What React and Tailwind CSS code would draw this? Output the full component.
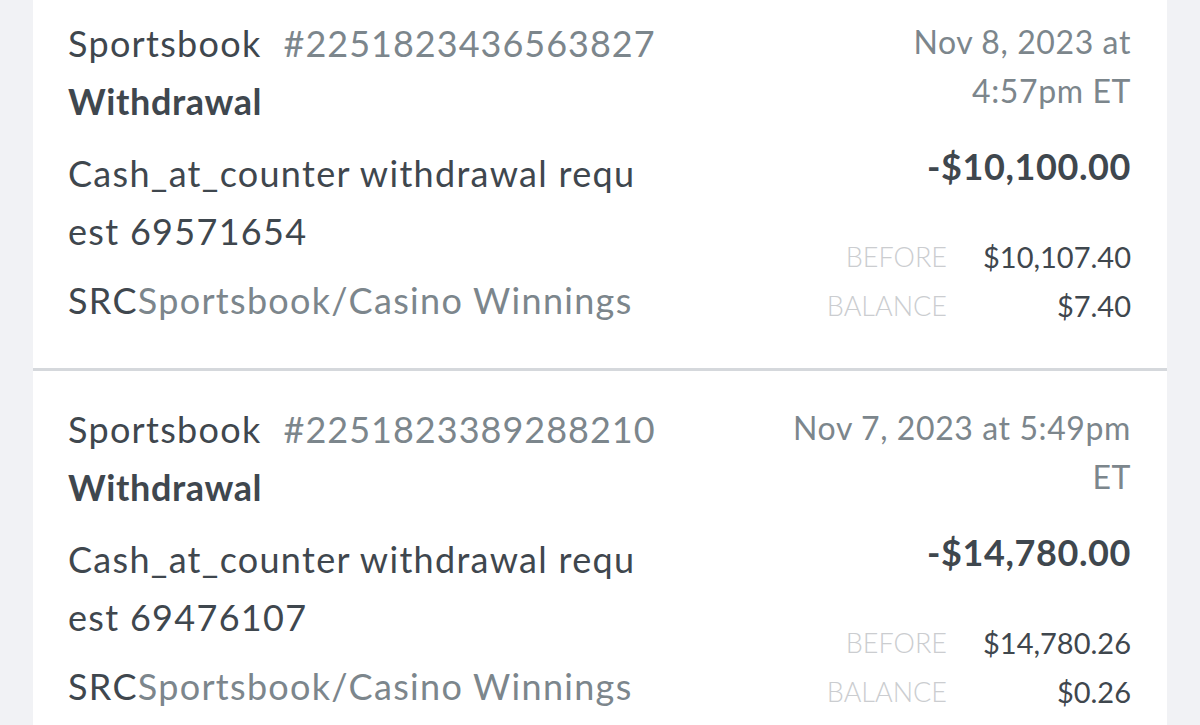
const transactions = [
  {
    id: '#2251823436563827',
    type: 'Withdrawal',
    desc: ['Cash_at_counter withdrawal requ', 'est 69571654'],
    date: ['Nov 8, 2023 at', '4:57pm ET'],
    amount: '-$10,100.00',
    before: '$10,107.40',
    balance: '$7.40',
  },
  {
    id: '#2251823389288210',
    type: 'Withdrawal',
    desc: ['Cash_at_counter withdrawal requ', 'est 69476107'],
    date: ['Nov 7, 2023 at 5:49pm', 'ET'],
    amount: '-$14,780.00',
    before: '$14,780.26',
    balance: '$0.26',
  },
];

function TransactionCard({ tx }) {
  return (
    <div className="flex justify-between bg-white pl-[35px] pr-[36px] pt-[29px] pb-[38px]">
      {/* left side: ref, type, description */}
      <div className="flex flex-col text-[36px] tracking-[1.3px] text-[#3f474e]">
        <div className="flex h-[58px] items-center">
          <span>Sportsbook</span>
          <span className="ml-[22px] tracking-[1px] text-[#7c868c]">{tx.id}</span>
        </div>
        <div className="flex h-[58px] items-center font-bold tracking-[0.6px]">{tx.type}</div>
        <div className="mt-[14px] flex flex-col">
          {tx.desc.map((line) => (
            <span key={line} className="flex h-[58px] items-center">{line}</span>
          ))}
        </div>
        <div className="mt-[11px] flex h-[58px] items-center">
          SRC<span className="text-[#7c868c]">Sportsbook/Casino Winnings</span>
        </div>
      </div>

      {/* right side: date, amount, balances */}
      <div className="flex flex-col items-end">
        <div className="mt-[3px] flex flex-col items-end text-[32px] leading-[49px] tracking-[0.6px] text-[#7c868c]">
          {tx.date.map((line) => (
            <span key={line}>{line}</span>
          ))}
        </div>
        <div className="mt-[24px] text-[36px] font-bold tracking-[0.6px] text-[#3f474e]">{tx.amount}</div>
        <div className="mt-[39px] grid grid-cols-[auto_auto] items-center gap-x-[36px] leading-[49px]">
          <span className="text-right text-[27px] font-light text-[#cbcdd0]">BEFORE</span>
          <span className="text-right text-[29px] text-[#3f474e]">{tx.before}</span>
          <span className="text-right text-[27px] font-light text-[#cbcdd0]">BALANCE</span>
          <span className="text-right text-[29px] text-[#3f474e]">{tx.balance}</span>
        </div>
      </div>
    </div>
  );
}

export default function App() {
  return (
    <div className="h-[725px] overflow-hidden bg-[#f1f2f5] px-[33px] font-['Lato',sans-serif]">
      <div className="-mt-[15px] flex flex-col gap-[3px] bg-[#d5d8dc]">
        {transactions.map((tx) => (
          <TransactionCard key={tx.id} tx={tx} />
        ))}
      </div>
    </div>
  );
}
